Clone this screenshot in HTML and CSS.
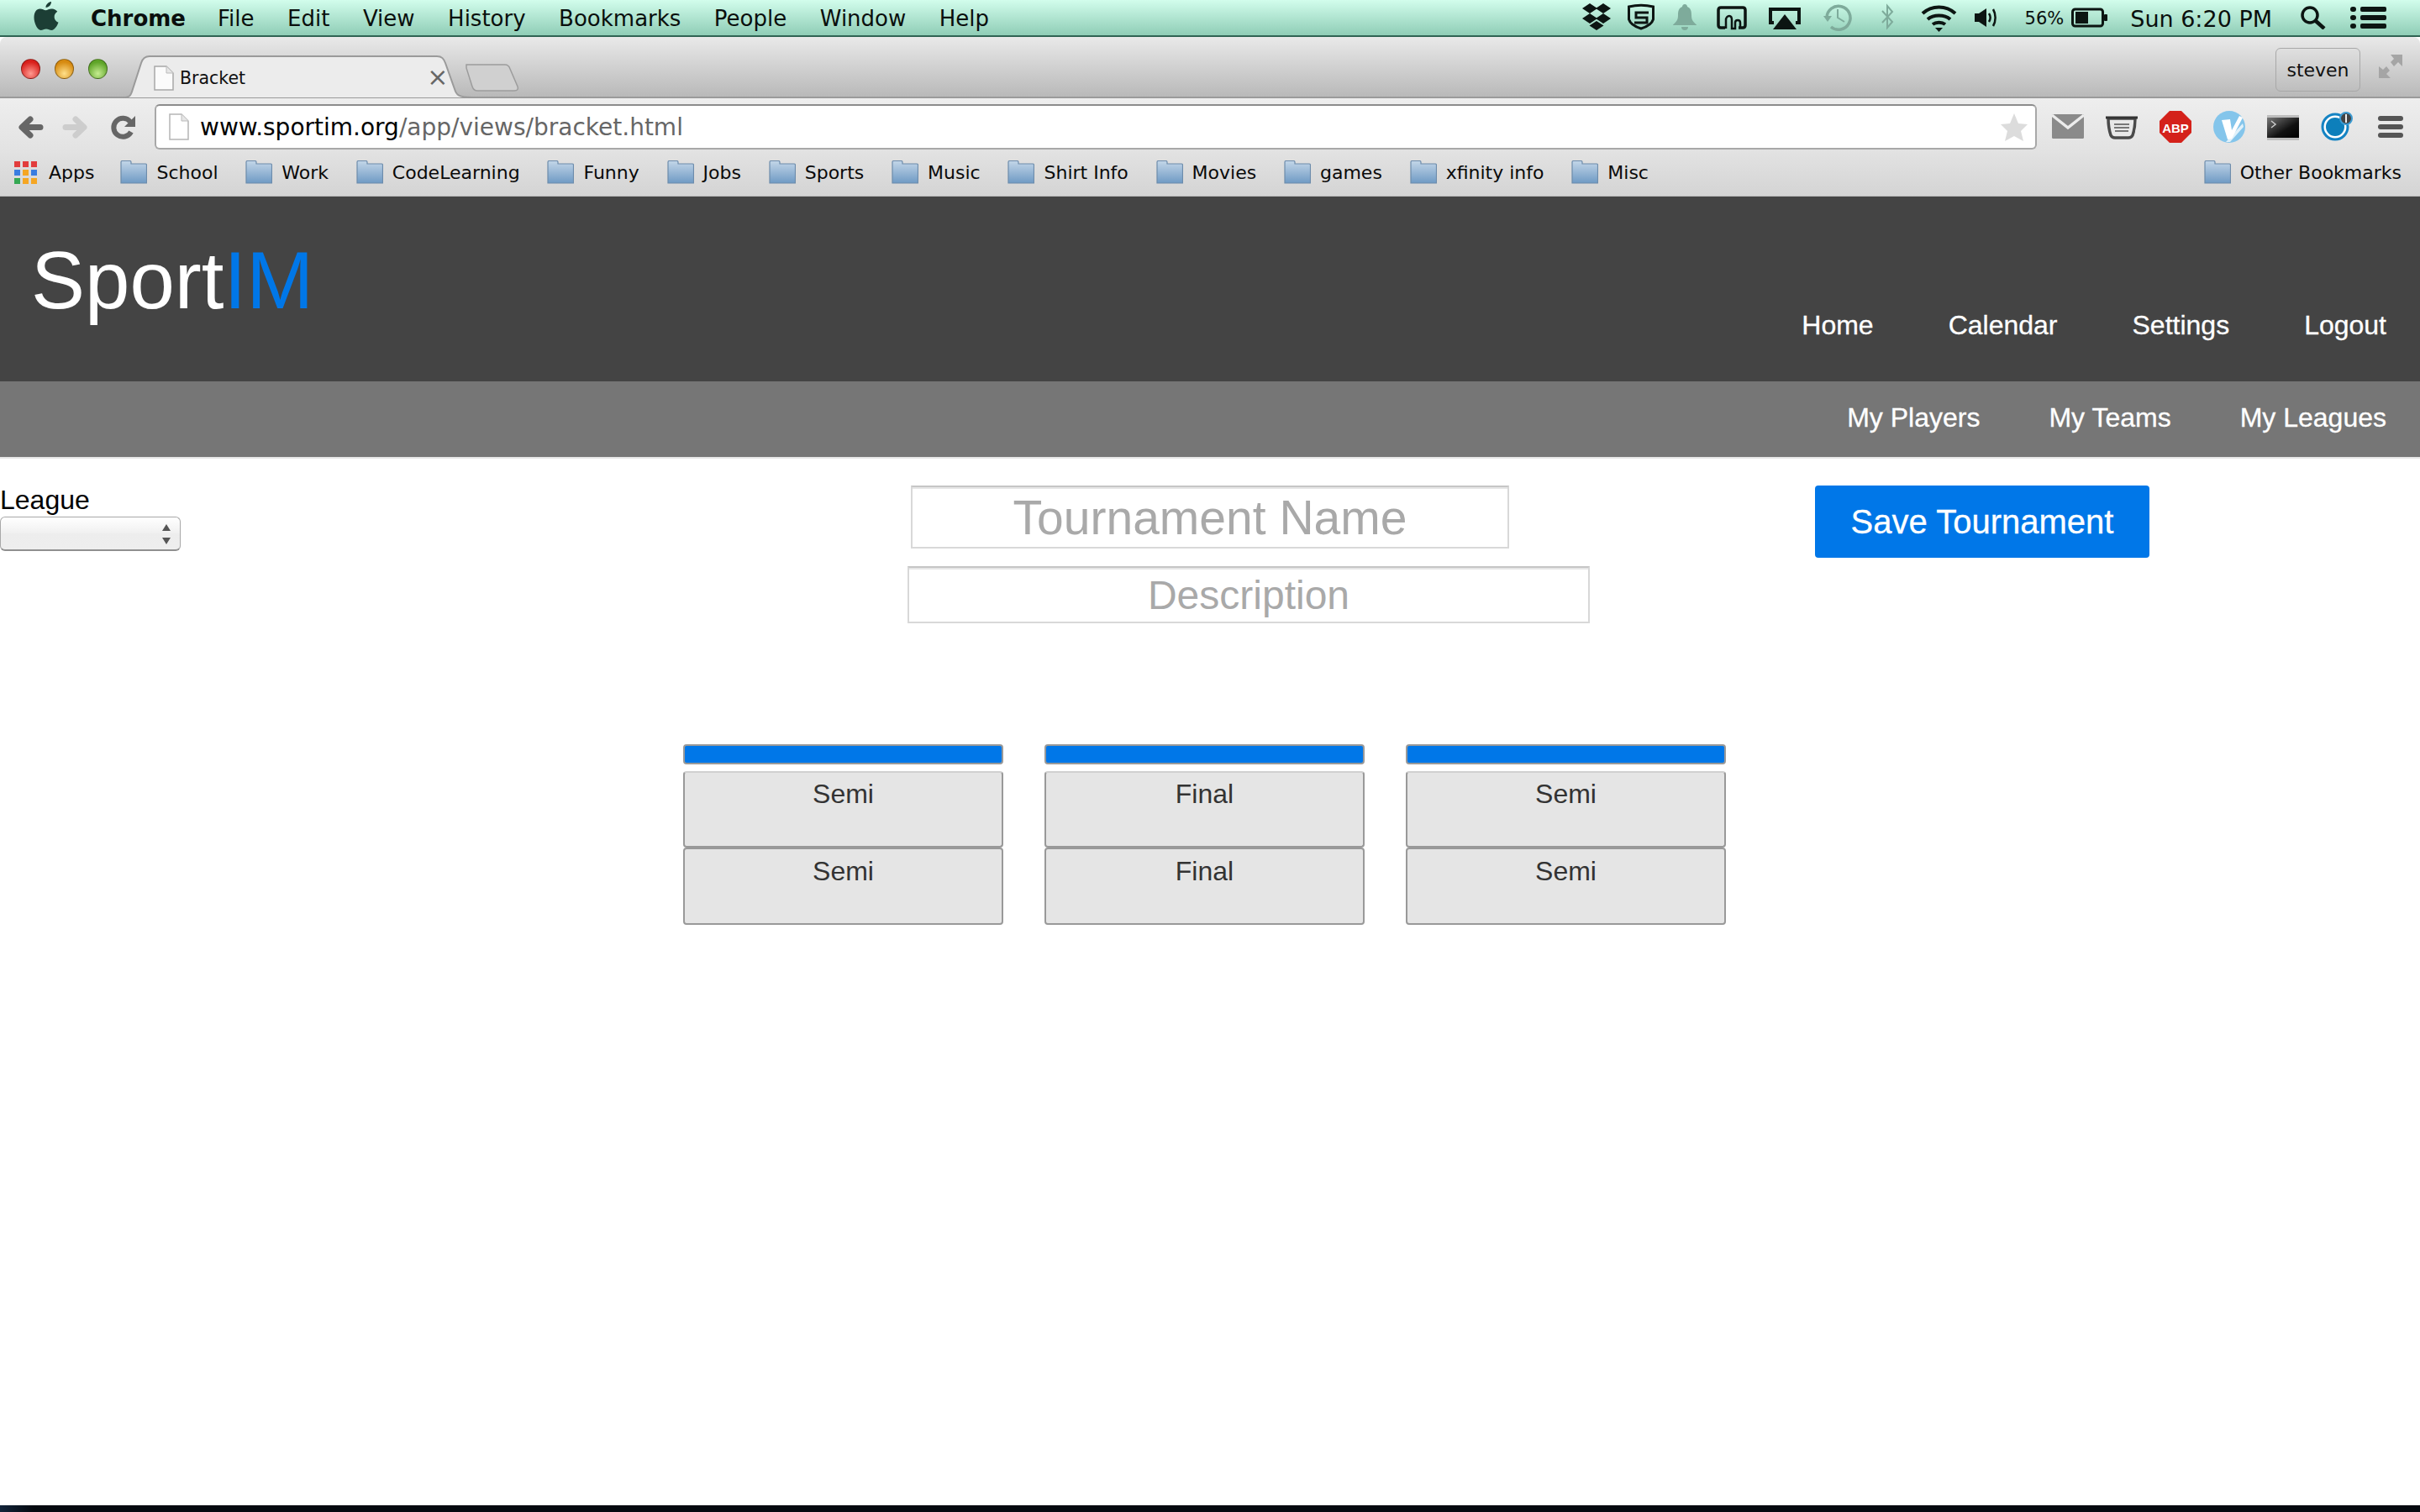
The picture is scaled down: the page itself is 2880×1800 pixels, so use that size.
FILE: index.html
```html
<!DOCTYPE html>
<html lang="en">
<head>
<meta charset="utf-8">
<title>Bracket</title>
<link rel="stylesheet" href="styles.css">
</head>
<body>
<div class="screen">
  <div class="menubar">
    <svg class="apple" width="30" height="38" viewBox="0 0 30 38"><path d="M21 2c.3 3-2.500 7-6.500 7C14.200 5.500 17.500 2.500 21 2zM7.500 10.500c3 0 5 1.700 7 1.700s4-1.900 7.500-1.700c2.500.1 4.800 1.200 6.300 3.300-5.500 3.300-4.500 11 1.200 13-1.500 4-4.600 9.200-8 9.200-2.600 0-3.800-1.500-6.500-1.500s-4 1.500-6.500 1.500C4.600 36 .5 27.500.5 21c0-6.500 3-10.500 7-10.500z" fill="#1c3e35"/></svg>
    <span class="menu-app">Chrome</span>
    <span class="menu-item">File</span>
    <span class="menu-item">Edit</span>
    <span class="menu-item">View</span>
    <span class="menu-item">History</span>
    <span class="menu-item">Bookmarks</span>
    <span class="menu-item">People</span>
    <span class="menu-item">Window</span>
    <span class="menu-item">Help</span>
    <svg class="tray" width="500" height="44" viewBox="1880 0 500 44">
      <path d="M1893 5l9 6-9 6-9-6zM1909 5l9 6-9 6-9-6zM1893 17l9 6-9 6-9-6zM1909 17l9 6-9 6-9-6zM1901 26l8.500 5.500-8.500 5.500-8.500-5.500z" fill="#0c1512"/>
      <path d="M1939.500 9c10-2.500 19-2.500 29 0v15c-1.500 5-8 9-14.500 11-6.500-2-13-6-14.500-11z" fill="none" stroke="#0c1512" stroke-width="3"/>
      <path d="M1963 16h-15v6h13v6h-15" fill="none" stroke="#0c1512" stroke-width="3"/>
      <path d="M2006 6c2 0 3 1.500 3 3 4 1.500 5 5 5 10s1 7 6 11.500v.5h-28v-.5c5-4.500 6-6.500 6-11.500s1-8.500 5-10c0-1.500 1-3 3-3zM2002 33h8c0 2.500-1.500 4-4 4s-4-1.500-4-4z" fill="#7eab9b"/>
      <path d="M2054 34h-5c-2 0-3-1-3-3V13c0-2 1-3 3-3h26c2 0 3 1 3 3v18c0 2-1 3-3 3h-5" fill="none" stroke="#0c1512" stroke-width="3.500"/>
      <path d="M2055 35V25c0-3 2-5 4-5s3 2 3 5v10h4v-7c0-2 1-3 3-3s3 1 3 3v7" fill="none" stroke="#0c1512" stroke-width="2.500"/>
      <path d="M2112 28h-4V12h34v16h-4" fill="none" stroke="#0c1512" stroke-width="4"/>
      <path d="M2125 18l14 18h-28z" fill="#0c1512"/>
      <path d="M2175 22a14 14 0 1 1 5 11" fill="none" stroke="#7eab9b" stroke-width="3.500"/>
      <path d="M2171 20h10l-5 7z" fill="#7eab9b"/>
      <path d="M2188 12v10l8 5" fill="none" stroke="#7eab9b" stroke-width="2"/>
      <path d="M2241 14l12 13-6 7V8l6 7-12 13" fill="none" stroke="#7eab9b" stroke-width="2"/>
      <path d="M2289 17c11-10 28-10 39 0M2295 24c7-6 20-6 27 0M2301 30c4-3 11-3 15 0" fill="none" stroke="#0c1512" stroke-width="4"/>
      <path d="M2304 34h9l-4.500 5z" fill="#0c1512"/>
      <path d="M2351 17h5l9-6v22l-9-6h-5z" fill="#0c1512"/>
      <path d="M2368 17c2 3 2 7 0 10M2373 12c3.500 6 3.500 14 0 20" fill="none" stroke="#0c1512" stroke-width="2.500"/>
    </svg>
    <span class="tray-pct">56%</span>
    <svg class="battery" width="44" height="24" viewBox="0 0 44 24"><rect x="1.500" y="2" width="36" height="20" rx="3" fill="none" stroke="#0c1512" stroke-width="3"/><rect x="5" y="5" width="15" height="14" fill="#0c1512"/><rect x="39" y="8" width="4" height="8" rx="1" fill="#0c1512"/></svg>
    <span class="tray-clock">Sun 6:20 PM</span>
    <svg class="search" width="32" height="28" viewBox="0 0 32 28"><circle cx="12" cy="11" r="9" fill="none" stroke="#0c1512" stroke-width="3.500"/><path d="M19 18l10 9" stroke="#0c1512" stroke-width="4.500" fill="none"/></svg>
    <svg class="list" width="44" height="28" viewBox="0 0 44 28"><g fill="#0c1512"><rect x="0" y="1" width="7" height="6" rx="3"/><rect x="0" y="11" width="7" height="6" rx="3"/><rect x="0" y="21" width="7" height="6" rx="3"/><rect x="12" y="1" width="31" height="6" rx="2"/><rect x="12" y="11" width="31" height="6" rx="2"/><rect x="12" y="21" width="31" height="6" rx="2"/></g></svg>
  </div>

  <div class="titlebar">
    <div class="lights"><i class="light red"></i><i class="light amber"></i><i class="light green"></i></div>
    <div class="tabs">
      <svg class="tab-shape" width="415" height="51" viewBox="0 0 415 51"><path d="M0 50c8 0 9-3 11-10L21 9c1.500-5 4-8 10-8h342c6 0 8 3 10 8l11 31c2 7 5 10 21 10" fill="#ececec" stroke="#9a9a9a" stroke-width="2"/></svg>
      <svg class="tab-page" width="24" height="30" viewBox="0 0 24 30"><path d="M1 1h14l8 8v20H1z" fill="#fbfbfb" stroke="#a8a8a8" stroke-width="1.500"/><path d="M15 1v8h8" fill="#e6e6e6" stroke="#bbb" stroke-width="1"/></svg>
      <span class="tab-title">Bracket</span>
      <span class="tab-close">×</span>
      <svg class="newtab" width="64" height="34" viewBox="0 0 64 34"><path d="M1 2h46c4 0 5 2 6 5l9 21c1 3 0 5-4 5H14c-4 0-5-2-6-5L1 6z" fill="#d0d0d0" stroke="#9c9c9c" stroke-width="1.500"/></svg>
    </div>
    <span class="profile">steven</span>
    <svg class="fullscreen" width="30" height="30" viewBox="0 0 30 30"><path d="M15 1h14v14l-5-5-5 5-4-5 4-4zM1 29V15l5 4 4-4 4 5-4 4 5 5z" fill="#a5a5a5"/></svg>
  </div>

  <div class="toolbar">
    <svg class="nav-icons" width="160" height="32" viewBox="18 137 160 32">
      <path d="M48 151.500H27M36 142l-10 9.500 10 9.500" fill="none" stroke="#666" stroke-width="7" stroke-linecap="round" stroke-linejoin="round"/>
      <path d="M78 151.500h21M90 142l10 9.500-10 9.500" fill="none" stroke="#cdcdcd" stroke-width="7" stroke-linecap="round" stroke-linejoin="round"/>
      <path d="M156 157a11 11 0 1 1-1-12" fill="none" stroke="#666" stroke-width="6"/>
      <path d="M161 138v13h-13z" fill="#666"/>
    </svg>
    <div class="omnibox">
      <svg class="omni-page" width="24" height="32" viewBox="0 0 24 32"><path d="M1 1h14l8 8v22H1z" fill="#fff" stroke="#b5b5b5" stroke-width="1.500"/><path d="M15 1v8h8" fill="#e6e6e6" stroke="#bbb" stroke-width="1"/></svg>
      <span class="url"><b class="url-host">www.sportim.org</b>/app/views/bracket.html</span>
      <svg class="star" width="34" height="34" viewBox="0 0 34 34"><path d="M17 1l5 12 11 1-8 8 3 12-11-6-11 6 3-12-8-8 11-1z" fill="#dcdcdc"/></svg>
    </div>
    <svg class="extensions" width="430" height="44" viewBox="2432 128 430 44">
      <rect x="2442" y="136" width="38" height="29" rx="1.500" fill="#8a8a8a"/><path d="M2442 137l19 15 19-15" fill="none" stroke="#ececec" stroke-width="3.500"/>
      <path d="M2509 141h32c0 8-1 14-3 20-1 2-3 3-5 3h-16c-2 0-4-1-5-3-2-6-3-12-3-20z" fill="#e8e8e8" stroke="#4a4a4a" stroke-width="3.500"/>
      <path d="M2506 140h38" stroke="#333" stroke-width="3"/>
      <path d="M2516 148h18M2516 152h18M2517 156h16" stroke="#777" stroke-width="2"/>
      <path d="M2582 132h14l12 12v14l-12 12h-14l-12-12v-14z" fill="#d4211a"/>
      <text x="2589" y="158" class="abp">ABP</text>
      <circle cx="2653" cy="151" r="19" fill="#84c5eb"/>
      <path d="M2644 143l10-1 2 13 9-17 4 2-13 25-5 1z" fill="#fff"/>
      <path d="M2649 169l20-22 1 4-16 18z" fill="#fff" opacity=".75"/>
      <defs><linearGradient id="tg" x1="0" y1="0" x2="1" y2="1"><stop offset="0" stop-color="#777"/><stop offset=".6" stop-color="#111"/><stop offset="1" stop-color="#000"/></linearGradient></defs>
      <rect x="2698" y="137" width="38" height="3" fill="#bdbdbd"/><rect x="2698" y="140" width="38" height="24" fill="url(#tg)"/><rect x="2698" y="164" width="38" height="3" fill="#bdbdbd"/><path d="M2703 144l5 4-5 4" stroke="#ccc" fill="none" stroke-width="1.500"/>
      <circle cx="2779" cy="151" r="15" fill="#fff" stroke="#1483c3" stroke-width="3"/>
      <circle cx="2779" cy="151" r="11" fill="#0d7fbb"/>
      <circle cx="2792" cy="141" r="7" fill="#444" stroke="#3d9bd2" stroke-width="2"/><path d="M2792 136v10" stroke="#eee" stroke-width="2"/>
      <g fill="#555"><rect x="2830" y="138" width="30" height="6" rx="3"/><rect x="2830" y="148" width="30" height="6" rx="3"/><rect x="2830" y="158" width="30" height="6" rx="3"/></g>
    </svg>
  </div>

  <div class="bookmarks">
    <svg class="apps-icon" width="28" height="27" viewBox="0 0 28 27"><rect x="0" y="0" width="7" height="7" fill="#e23d3d"/><rect x="10" y="0" width="7" height="7" fill="#e23d3d"/><rect x="20" y="0" width="7" height="7" fill="#e23d3d"/><rect x="0" y="10" width="7" height="7" fill="#3a7de0"/><rect x="10" y="10" width="7" height="7" fill="#f5a623"/><rect x="20" y="10" width="7" height="7" fill="#3a7de0"/><rect x="0" y="20" width="7" height="7" fill="#35a853"/><rect x="10" y="20" width="7" height="7" fill="#f5a623"/><rect x="20" y="20" width="7" height="7" fill="#f5a623"/></svg>
    <span class="bm-apps">Apps</span>
    <span class="bm"><svg class="folder" width="32" height="28" viewBox="0 0 32 28"><use href="#fld"/></svg>School</span>
    <span class="bm"><svg class="folder" width="32" height="28" viewBox="0 0 32 28"><use href="#fld"/></svg>Work</span>
    <span class="bm"><svg class="folder" width="32" height="28" viewBox="0 0 32 28"><use href="#fld"/></svg>CodeLearning</span>
    <span class="bm"><svg class="folder" width="32" height="28" viewBox="0 0 32 28"><use href="#fld"/></svg>Funny</span>
    <span class="bm"><svg class="folder" width="32" height="28" viewBox="0 0 32 28"><use href="#fld"/></svg>Jobs</span>
    <span class="bm"><svg class="folder" width="32" height="28" viewBox="0 0 32 28"><use href="#fld"/></svg>Sports</span>
    <span class="bm"><svg class="folder" width="32" height="28" viewBox="0 0 32 28"><use href="#fld"/></svg>Music</span>
    <span class="bm"><svg class="folder" width="32" height="28" viewBox="0 0 32 28"><use href="#fld"/></svg>Shirt Info</span>
    <span class="bm"><svg class="folder" width="32" height="28" viewBox="0 0 32 28"><use href="#fld"/></svg>Movies</span>
    <span class="bm"><svg class="folder" width="32" height="28" viewBox="0 0 32 28"><use href="#fld"/></svg>games</span>
    <span class="bm"><svg class="folder" width="32" height="28" viewBox="0 0 32 28"><use href="#fld"/></svg>xfinity info</span>
    <span class="bm"><svg class="folder" width="32" height="28" viewBox="0 0 32 28"><use href="#fld"/></svg>Misc</span>
    <span class="bm bm-other"><svg class="folder" width="32" height="28" viewBox="0 0 32 28"><use href="#fld"/></svg>Other Bookmarks</span>
  </div>

  <header class="site-header">
    <h1 class="logo">Sport<span class="logo-im">IM</span></h1>
    <nav class="main-nav"><a>Home</a><a>Calendar</a><a>Settings</a><a>Logout</a></nav>
  </header>
  <nav class="sub-nav"><a>My Players</a><a>My Teams</a><a>My Leagues</a></nav>

  <main class="content">
    <div class="form-row">
      <div class="league">
        <label class="league-label" for="league">League</label>
        <div class="select-wrap">
          <select class="league-select" id="league"><option></option></select>
          <svg class="select-arrows" width="12" height="24" viewBox="0 0 12 24"><path d="M6 0l5 8H1zM6 24l-5-8h10z" fill="#555"/></svg>
        </div>
      </div>
      <div class="fields">
        <input class="field field-name" placeholder="Tournament Name">
        <input class="field field-desc" placeholder="Description">
      </div>
      <button class="save">Save Tournament</button>
    </div>
    <div class="bracket">
      <div class="round"><div class="round-head"></div><div class="match">Semi</div><div class="match">Semi</div></div>
      <div class="round"><div class="round-head"></div><div class="match">Final</div><div class="match">Final</div></div>
      <div class="round"><div class="round-head"></div><div class="match">Semi</div><div class="match">Semi</div></div>
    </div>
  </main>
  <div class="desktop-edge"></div>
</div>
<svg class="defs" width="0" height="0"><defs><linearGradient id="fg" x1="0" y1="0" x2="0" y2="1"><stop offset="0" stop-color="#c3d6e8"/><stop offset="1" stop-color="#6f9ac4"/></linearGradient><g id="fld"><path d="M1 27V2c0-1 .5-1.500 1.500-1.500h9c1 0 1.500.5 1.500 1.500v2h17c1 0 1.500.5 1.500 1.500V27z" fill="url(#fg)" stroke="#6d8cab" stroke-width="1.200"/></g></defs></svg>
</body>
</html>
```
FILE: styles.css
```css
* { box-sizing: border-box; }
html, body { margin: 0; padding: 0; background: #fff; }
.screen { width: 2880px; height: 1800px; display: flex; flex-direction: column; overflow: hidden; font-family: "Liberation Sans", Arial, sans-serif; }

.menubar { height: 44px; flex: none; display: flex; align-items: center; padding: 0 0 0 40px; background: linear-gradient(#d2fdec, #8fcdb6); border-bottom: 2px solid #2f6353; font-family: "DejaVu Sans", sans-serif; font-size: 26px; color: #0a0f0d; white-space: nowrap; }
.apple { flex: none; margin-right: 38px; margin-top: -4px; }
.menu-app { font-weight: 700; margin: 2px 38px 0 0; font-size: 26px; }
.menu-item { margin: 2px 39.500px 0 0; }
.tray { flex: none; margin-left: auto; margin-right: 31px; }
.tray-pct { font-size: 21px; margin: 2px 9px 0 0; }
.battery { flex: none; margin-right: 26px; }
.tray-clock { font-size: 27px; margin: 2px 33px 0 0; }
.search { flex: none; margin-right: 28px; }
.list { flex: none; margin-right: 39px; }

.titlebar { height: 73px; flex: none; display: flex; align-items: flex-start; background: linear-gradient(#e9e9e9, #b9b9b9); border-bottom: 2px solid #9a9a9a; border-top-left-radius: 8px; border-top-right-radius: 8px; }
.lights { display: flex; gap: 17px; padding: 26px 0 0 25px; flex: none; }
.light { width: 23px; height: 24px; border-radius: 50%; display: block; border: 1px solid rgba(0,0,0,.35); }
.red { background: radial-gradient(circle at 50% 75%, #ff9a90, #d8201c 70%); }
.amber { background: radial-gradient(circle at 50% 75%, #ffe08a, #d68a10 70%); }
.green { background: radial-gradient(circle at 50% 75%, #c5ec90, #5ea428 70%); }
.tabs { position: relative; width: 470px; height: 73px; margin-left: 19px; flex: none; display: flex; align-items: flex-start; }
.tab-shape { position: absolute; left: 0; top: 22px; }
.tab-page { position: relative; margin: 34px 0 0 36px; flex: none; }
.tab-title { position: relative; margin: 37px 0 0 7px; font-family: "DejaVu Sans", sans-serif; font-size: 20.500px; color: #111; }
.tab-close { position: relative; margin: 30px 0 0 216px; font-family: "DejaVu Sans", sans-serif; font-size: 30px; color: #666; line-height: 36px; }
.newtab { position: absolute; left: 407px; top: 31px; }
.profile { margin: 13px 0 0 auto; width: 101px; height: 52px; display: flex; align-items: center; justify-content: center; border: 1.500px solid #a8a8a8; border-radius: 6px; font-family: "DejaVu Sans", sans-serif; font-size: 22px; color: #111; }
.fullscreen { flex: none; margin: 20px 20px 0 21px; }

.toolbar { height: 60px; flex: none; display: flex; align-items: flex-start; background: linear-gradient(#eeeeee, #e3e3e3); position: relative; }
.nav-icons { flex: none; margin: 20px 0 0 18px; }
.omnibox { flex: none; width: 2240px; height: 54px; margin: 7px 0 0 6px; display: flex; align-items: center; background: #fff; border: 2px solid #a8a8a8; border-top-color: #8c8c8c; border-radius: 6px; padding-left: 15px; }
.omni-page { flex: none; margin-right: 13px; }
.url { font-family: "DejaVu Sans", sans-serif; font-size: 28px; color: #666; white-space: nowrap; }
.url-host { font-weight: 400; color: #000; }
.star { flex: none; margin-left: auto; margin-right: 8px; }
.extensions { flex: none; margin: 11px 0 0 8px; }
.abp { font-family: "Liberation Sans", sans-serif; font-weight: 700; font-size: 15px; fill: #fff; text-anchor: middle; }

.bookmarks { height: 57px; flex: none; display: flex; align-items: center; padding-left: 17px; background: linear-gradient(#e3e3e3, #d4d4d4); border-bottom: 1px solid #bbb; font-family: "DejaVu Sans", sans-serif; font-size: 22px; color: #0a0a0a; white-space: nowrap; }
.apps-icon { flex: none; margin-right: 13px; }
.bm-apps { margin-right: 31px; }
.bm { display: flex; align-items: center; margin-right: 32.800px; }
.folder { flex: none; margin-right: 11px; }
.bm-other { margin-left: auto; margin-right: 22px; }
.defs { position: absolute; }

.site-header { height: 220px; flex: none; display: flex; justify-content: space-between; background: #444; }
.logo { margin: 45px 0 0 37px; font-size: 96px; line-height: 110px; font-weight: 400; color: #fff; letter-spacing: 0; }
.logo-im { color: #0077e8; }
.main-nav { display: flex; gap: 89px; margin: 133px 40px 0 0; }
.main-nav a, .sub-nav a { font-size: 32px; line-height: 40px; color: #fff; -webkit-text-stroke: .3px #fff; }
.sub-nav { height: 92px; flex: none; display: flex; justify-content: flex-end; gap: 82px; padding: 23px 40px 0 0; background: #767676; border-bottom: 2px solid #e6e6e6; }

.content { flex: 1; background: #fff; }
.form-row { display: flex; align-items: flex-start; padding-top: 32px; }
.league { width: 1080px; flex: none; margin-top: -3px; }
.league-label { display: block; font-size: 32px; line-height: 40px; color: #000; }
.select-wrap { position: relative; width: 215px; height: 41px; }
.league-select { appearance: none; display: block; width: 100%; height: 100%; border: 1.500px solid #a8a8a8; border-bottom: 2px solid #909090; border-radius: 6px; background: linear-gradient(#fff, #f0f0f0 50%, #ededed 50%, #eee); }
.select-arrows { position: absolute; right: 11px; top: 9px; }
.fields { width: 812px; flex: none; display: flex; flex-direction: column; }
.field { display: block; border: 2px solid #d8d8d8; border-top-color: #c6c6c6; box-shadow: inset 0 2px 0 #e6e6e6; padding: 0; background: #fff; text-align: center; font-family: "Liberation Sans", Arial, sans-serif; color: #333; outline: none; }
.field::placeholder { color: #a9a9a9; opacity: 1; }
.field-name { width: 712px; height: 75px; margin-left: 4px; font-size: 57px; }
.field-desc { width: 812px; height: 68px; margin-top: 21px; font-size: 48px; }
.save { width: 398px; height: 86px; margin-left: 268px; border: 0; border-radius: 4px; background: #0077e8; color: #fff; font-family: "Liberation Sans", Arial, sans-serif; font-size: 40px; padding: 0; -webkit-text-stroke: .3px #fff; }

.bracket { display: flex; gap: 49px; margin: 144px 0 0 813px; }
.round { width: 381px; flex: none; }
.round-head { height: 24px; margin-bottom: 8px; background: #0077e8; border: 2px solid #999; border-radius: 4px; }
.match { height: 91px; background: #e5e5e5; border: 2px solid #999; border-top-color: #d0d0d0; border-radius: 4px; text-align: center; font-size: 32px; line-height: 40px; padding-top: 5px; color: #333; }
.match + .match { height: 92px; padding-top: 6px; border-top-color: #999; }

.desktop-edge { height: 8px; flex: none; background: linear-gradient(90deg, #12243a, #05090f 40px, #05090f); }
```
